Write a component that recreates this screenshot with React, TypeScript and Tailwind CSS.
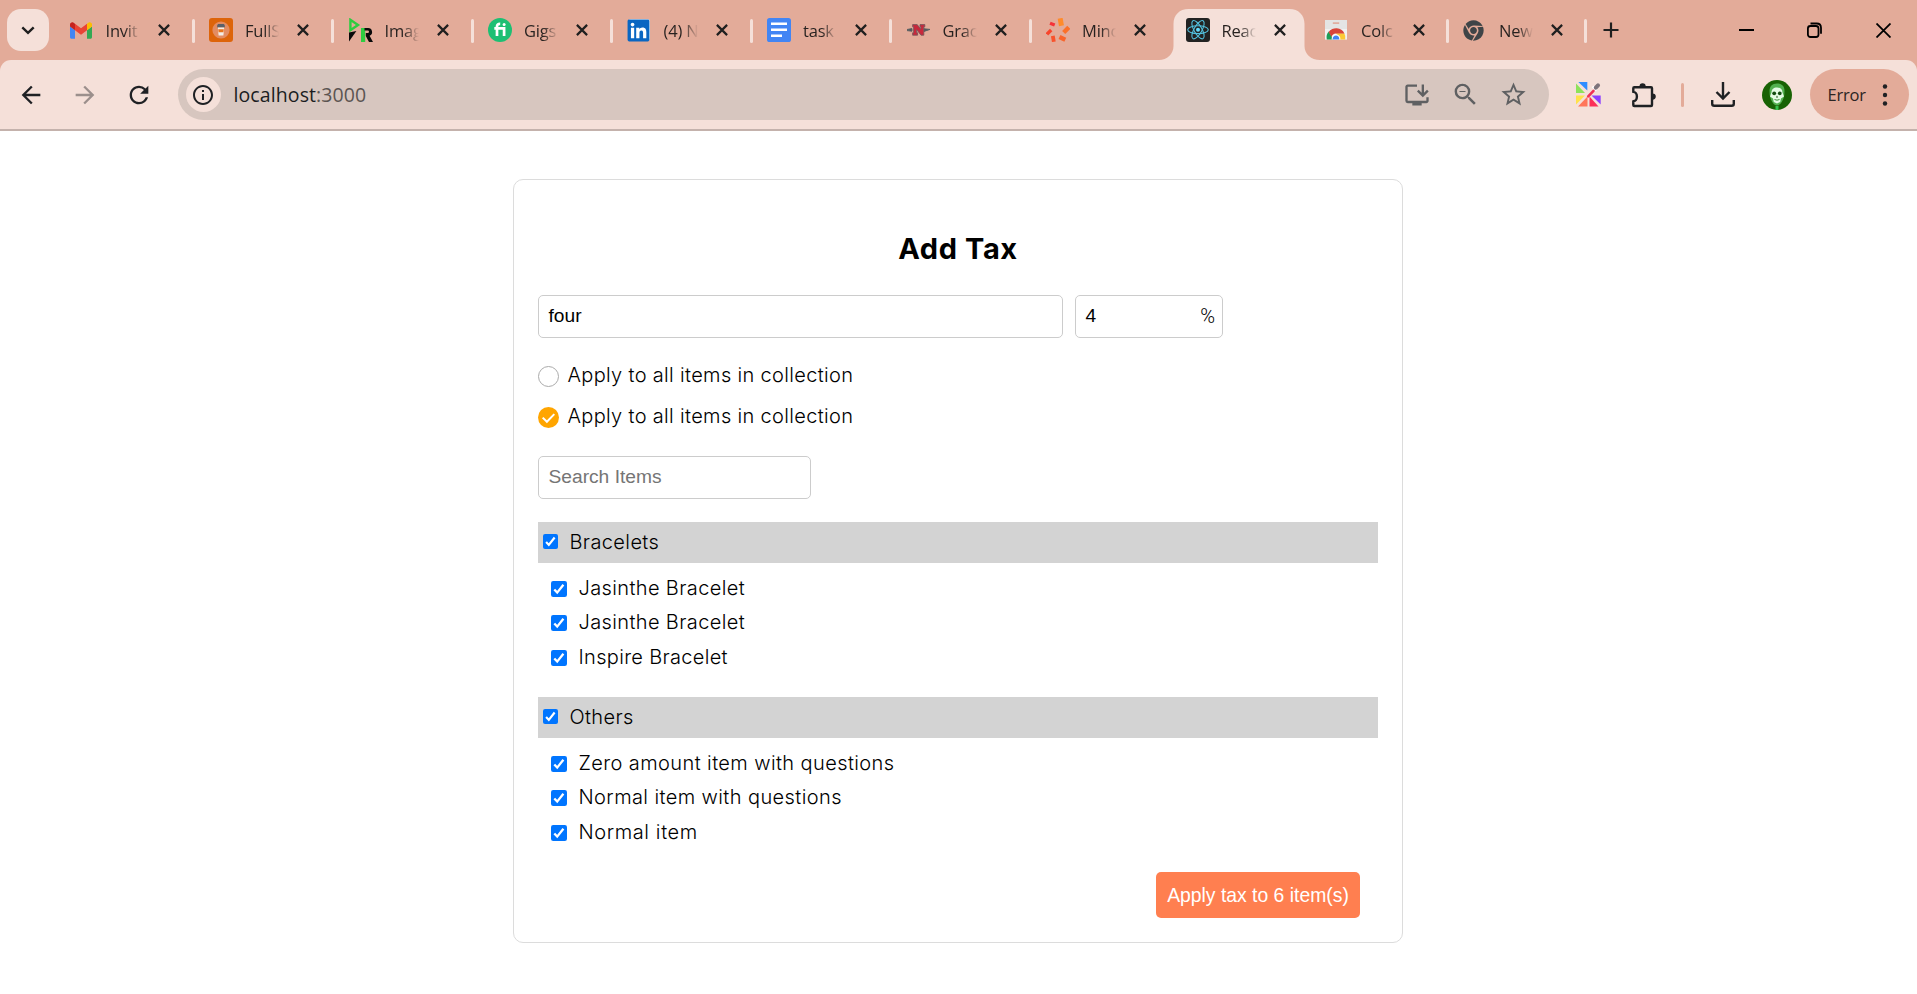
import type { ReactNode } from "react";
import { MdArrowBack, MdArrowForward, MdInfoOutline, MdInstallDesktop, MdRefresh, MdStarBorder, MdZoomOut } from "react-icons/md";
import { FaChrome, FaLinkedin } from "react-icons/fa";

function GmailIcon() {
  return (
    <svg width="22" height="17" viewBox="52 42 88 66">
      <path fill="#4285f4" d="M58 108h14V74L52 59v43c0 3.32 2.69 6 6 6" />
      <path fill="#34a853" d="M120 108h14c3.32 0 6-2.69 6-6V59l-20 15" />
      <path fill="#fbbc04" d="M120 48v26l20-15v-8c0-7.42-8.47-11.65-14.4-7.2" />
      <path fill="#ea4335" d="M72 74V48l24 18 24-18v26L96 92" />
      <path fill="#c5221f" d="M52 51v8l20 15V48l-5.6-4.2c-5.94-4.45-14.4-.22-14.4 7.2" />
    </svg>
  );
}

function CoffeeIcon() {
  return (
    <svg width="24" height="24" viewBox="0 0 24 24">
      <rect width="24" height="24" rx="3" fill="#dd640a" />
      <circle cx="12" cy="12" r="8.6" fill="#e38c62" />
      <path d="M8.200 7.400 9 6h6l.8 1.400v2H8.200z" fill="#5b6069" />
      <path d="M8.800 9.400h6.400L14.400 17.600H9.600z" fill="#f3eee8" />
      <path d="M9.200 11.200h5.600l-.4 3H9.600z" fill="#e8731c" />
    </svg>
  );
}

function TriangleRIcon() {
  return (
    <svg width="24" height="24" viewBox="0 0 24 24">
      <path d="M1.4 1.8v10.400L9 6.900z" fill="none" stroke="#2ecc40" strokeWidth="2.4" />
      <path d="M0 14.500 7.400 13 0 23.500z" fill="#0a0a0a" />
      <path d="M12 10h4.200v14H12z" fill="#2ecc40" />
      <path d="M15.5 10H19a4 4 0 0 1 1.6 7.7L24 24h-4l-3.2-6v-3h2a1.2 1.2 0 0 0 0-2.4h-3.3z" fill="#0a0a0a" />
    </svg>
  );
}

function FiIcon() {
  return (
    <svg width="24" height="24" viewBox="0 0 24 24">
      <circle cx="12" cy="12" r="12" fill="#1dbf73" />
      <path d="M6.3 10.4h9.8V18M9 18V8.6c0-1.9 1-2.8 3.2-2.7" fill="none" stroke="#fff" strokeWidth="2.7" />
      <circle cx="16.1" cy="6.6" r="1.5" fill="#fff" />
    </svg>
  );
}

function LinkedInIcon() {
  return (
    <span className="flex size-[22px] items-center justify-center rounded-[3px] bg-white text-[#0a66c2]">
      <FaLinkedin className="size-[25px] shrink-0" />
    </span>
  );
}

function DocsIcon() {
  return (
    <svg width="24" height="24" viewBox="0 0 24 24">
      <rect width="24" height="24" rx="2.6" fill="#4285f4" />
      <path d="M4 5.700h16M4 9.800h0M4 11.700h16M4 17.800h11" stroke="#fff" strokeWidth="2.600" />
    </svg>
  );
}

function NavyNIcon() {
  return (
    <svg width="24" height="24" viewBox="0 0 24 24">
      <path d="M0 11.500 5 10.600v2.600L0 12.600zM17 10.800l6 .6-6 2z" fill="#4f5558" stroke="#5d6265" strokeWidth="1" />
      <path d="M5.600 6.600h4.600l3.600 4.600V8.800h-.8V6.600h4.800v2.200h-1v8.400h-2.800l-4.400-5.600v3.200h1v2.400h-5v-2.400h1V8.800h-1z" fill="#c8283c" stroke="#70585a" strokeWidth=".8" />
    </svg>
  );
}

function SparkIcon() {
  return (
    <svg width="24" height="24" viewBox="0 0 24 24">
      <rect x="12.3" y=".2" width="5" height="7.6" fill="#ff8b2b" transform="rotate(-10 15 4)" />
      <rect x="18" y="8.4" width="4.4" height="7.2" fill="#fb7029" transform="rotate(45 20.3 12)" />
      <rect x="13.2" y="18.2" width="6.4" height="4.4" fill="#f9642a" transform="rotate(25 16.3 20.4)" />
      <rect x="5.4" y="17.8" width="3.8" height="6" fill="#f8522c" transform="rotate(-10 7.3 20.6)" />
      <rect x="0" y="12.4" width="6" height="3.4" fill="#f8452c" transform="rotate(-45 3 14)" />
      <rect x="3.9" y="4.4" width="5" height="3.4" fill="#f53238" transform="rotate(20 6.3 6)" />
    </svg>
  );
}

function ReactIcon() {
  return (
    <svg width="24" height="24" viewBox="0 0 24 24">
      <rect width="24" height="24" rx="3" fill="#222" />
      <g fill="none" stroke="#53c1de" strokeWidth="1.1">
        <ellipse cx="12" cy="11.7" rx="10.3" ry="3.9" />
        <ellipse cx="12" cy="11.7" rx="10.3" ry="3.9" transform="rotate(60 12 11.7)" />
        <ellipse cx="12" cy="11.7" rx="10.3" ry="3.9" transform="rotate(120 12 11.7)" />
      </g>
      <circle cx="12" cy="11.7" r="2" fill="#61dafb" />
    </svg>
  );
}

function WebStoreIcon() {
  return (
    <svg width="22" height="20" viewBox="0 0 22 20">
      <path d="M0 0h22v19.6H0z" fill="#f1f1f1" />
      <path d="M0 0h22v9H0z" fill="#e4e4e4" />
      <path d="M7.8 2.4h6.4v1.4H7.8z" fill="#e0a090" />
      <path d="M1.8 19.6a9.2 9.2 0 0 1 2-8.2l4.6 8.2z" fill="#1e9e57" />
      <path d="M20.2 19.6a9.2 9.2 0 0 0-.9-6.4H11l3 6.4z" fill="#fcc934" />
      <path d="M3.6 12a9.2 9.2 0 0 1 15.8 1.4H11a4.6 4.6 0 0 0-4.4 3.6z" fill="#d9453a" />
      <path d="M6.7 19.6a4.4 4.4 0 1 1 8.6 0z" fill="#fff" />
      <path d="M7.8 19.6a3.3 3.3 0 1 1 6.4 0z" fill="#4285f4" />
    </svg>
  );
}

function CloseIcon() {
  return (
    <svg width="12" height="12" viewBox="0 0 12 12">
      <path d="m.9.9 10.2 10.2M11.1.9.9 11.1" stroke="#1f1f1f" strokeWidth="2.2" />
    </svg>
  );
}

interface TabProps {
  icon: ReactNode;
  title: string;
  last?: boolean;
  active?: boolean;
  divider?: boolean;
}

function Tab({ icon, title, last, active, divider = true }: TabProps) {
  return (
    <div className={`relative flex h-[60px] shrink-0 items-center ${last ? "w-[138px]" : "w-[139.5px]"}`}>
      {active && (
        <svg className="absolute top-[9px] left-[-12px]" width="162" height="51" viewBox="0 0 162 51">
          <path d="M0 51c8 0 14.500-6 14.500-14V15c0-9 6-15 15-15h101c9 0 15 6 15 15v22c0 8 6.500 14 15.500 14z" fill="#f5e0d9" />
        </svg>
      )}
      <span className="relative ml-[14.500px] flex w-6 justify-start">{icon}</span>
      <span className="relative ml-[12px] w-[34px] bg-linear-to-r from-[#26211f] from-55% to-transparent to-100% bg-clip-text pt-[2px] text-[16.500px] leading-6 tracking-[-0.200px] whitespace-nowrap text-transparent">
        {title}
      </span>
      <span className="relative ml-[18px]">
        <CloseIcon />
      </span>
      {divider && <span className="absolute top-[19px] right-0 h-6 w-[3px] rounded-full bg-[#f5e0d9]" />}
    </div>
  );
}

function TabStrip() {
  return (
    <div className="flex h-[60px] items-center bg-[#e3ab99]">
      <div className="ml-[7px] flex size-[42px] shrink-0 items-center justify-center rounded-[14px] bg-[#f5e0d9]">
        <svg width="14" height="9" viewBox="0 0 14 9">
          <path d="m1.300 1.300 5.700 5.500 5.700-5.500" fill="none" stroke="#1f1f1f" strokeWidth="2.400" />
        </svg>
      </div>
      <div className="ml-[6px] flex">
        <Tab icon={<GmailIcon />} title="Invit" />
        <Tab icon={<CoffeeIcon />} title="FullS" />
        <Tab icon={<TriangleRIcon />} title="Imag" />
        <Tab icon={<FiIcon />} title="Gigs" />
        <Tab icon={<LinkedInIcon />} title="(4) N" />
        <Tab icon={<DocsIcon />} title="task" />
        <Tab icon={<NavyNIcon />} title="Grac" />
        <Tab icon={<SparkIcon />} title="Minc" divider={false} />
        <Tab icon={<ReactIcon />} title="Reac" active divider={false} />
        <Tab icon={<WebStoreIcon />} title="Colc" last />
        <Tab icon={<FaChrome className="size-[21px] text-[#3f4447]" />} title="New" last />
      </div>
      <svg className="ml-4" width="16" height="16" viewBox="0 0 16 16">
        <path d="M8 .5v15M.5 8h15" stroke="#1f1f1f" strokeWidth="2.200" />
      </svg>
      <div className="ml-auto flex items-center pr-[26px]">
        <span className="mr-[53px] h-[2px] w-[15px] bg-black" />
        <svg className="mr-[54px]" width="15" height="16" viewBox="0 0 15 16">
          <rect x=".9" y="4" width="10.600" height="11" rx="2.500" fill="none" stroke="#000" strokeWidth="1.800" />
          <path d="M3.500 1.500h6.200c2.500 0 4.300 1.800 4.300 4.300v6" fill="none" stroke="#000" strokeWidth="1.800" />
        </svg>
        <svg width="15" height="15" viewBox="0 0 15 15">
          <path d="m.5.5 14 14m0-14-14 14" stroke="#000" strokeWidth="1.800" />
        </svg>
      </div>
    </div>
  );
}

function ColorPickerIcon() {
  return (
    <svg width="25" height="25" viewBox="0 0 25 25">
      <path d="M2.300 0h9v8.500z" fill="#2f8dff" />
      <path d="M0 1.500 9 11H0z" fill="#8de25a" />
      <path d="M0 13.500h9L0 22.500z" fill="#ffe24a" />
      <path d="M11.500 14.500V24.500H2z" fill="#ff765a" />
      <path d="M13.500 14.500l9 10h-9z" fill="#fb2f58" />
      <path d="M15.500 13.500h9.200v9z" fill="#8d40ff" />
      <path d="m12.200 14.300 5.300-5.500" stroke="#f23056" strokeWidth="2.600" strokeLinecap="round" />
      <path d="m16.500 4.500 4 4" stroke="#fff" strokeWidth="2.200" />
      <path d="m19.800 5.700 2.200-2.400" stroke="#7d747b" strokeWidth="4" strokeLinecap="round" />
    </svg>
  );
}

function PuzzleIcon() {
  return (
    <svg width="26" height="26" viewBox="0 0 26 26">
      <path
        d="M2.300 6.200q0-1 1-1H20q1 0 1 1V23q0 1-1 1H3.300q-1 0-1-1v-3.700c2 0 3.600-2 3.600-4.700s-1.600-4.700-3.600-4.700z"
        fill="none"
        stroke="#1f2124"
        strokeWidth="2.400"
        strokeLinejoin="round"
      />
      <path d="M8.500 4.500a3.100 3.300 0 0 1 6.200 0zM21.500 11.500a3.300 3.100 0 0 1 0 6.200z" fill="#1f2124" />
    </svg>
  );
}

function SkullAvatar() {
  return (
    <svg width="30" height="30" viewBox="0 0 30 30">
      <circle cx="15" cy="15" r="15" fill="#186204" />
      <path d="M15 3.500c-5 0-7.500 3-7.500 7.500 0 5 1 8 2.500 10.500s3 4 5 4 3.500-1.500 5-4 2.500-5.500 2.500-10.500c0-4.500-2.500-7.500-7.500-7.500z" fill="#52b04f" />
      <path d="M15 7.500c-3.500 0-5.500 2-5.500 5L8 16.500l3 2 .8 3.500 3.200 1.500 3.200-1.500.8-3.500 3-2-1.500-4c0-3-2-5-5.500-5z" fill="#e4fbe4" />
      <circle cx="12.200" cy="13.300" r="1.900" fill="#124d10" />
      <circle cx="17.800" cy="13.300" r="1.900" fill="#124d10" />
      <path d="m15 15.500-1 2h2z" fill="#124d10" />
      <path d="M12.500 19.500q2.500 1.400 5 0" stroke="#3b8f3d" fill="none" />
      <path d="M15 26v4" stroke="#37c04c" strokeWidth="3" />
    </svg>
  );
}

function Toolbar() {
  return (
    <div className="h-[71px] bg-[#e3ab99]">
      <div className="flex h-[71px] items-center rounded-t-[11px] border-b-2 border-[#c4b2ac] bg-[#f5e0d9]">
        <MdArrowBack className="ml-[17px] size-[28px] shrink-0 text-[#1f2124]" />
        <MdArrowForward className="ml-[26px] size-[28px] shrink-0 text-[#9b8f8c]" />
        <MdRefresh className="ml-[26px] size-[28px] shrink-0 text-[#1f2124]" />
        <div className="ml-[25px] flex h-[51px] w-[1371px] shrink-0 items-center rounded-full bg-[#d7c6bf]">
          <span className="ml-[7.500px] flex size-[35px] items-center justify-center rounded-full bg-[#f5e0d9]">
            <MdInfoOutline className="size-6 text-[#1f2124]" />
          </span>
          <span className="ml-[13px] text-[19.500px] leading-7 tracking-[0.100px] text-[#1b1d22]">
            localhost<span className="text-[#5c5552]">:3000</span>
          </span>
          <MdInstallDesktop className="ml-auto size-[28px] text-[#5f6062]" />
          <MdZoomOut className="ml-[20px] size-[29px] text-[#5f6062]" />
          <MdStarBorder className="mr-[21px] ml-[19px] size-[29px] text-[#5f6062]" />
        </div>
        <div className="ml-[27px]">
          <ColorPickerIcon />
        </div>
        <div className="ml-[30px]">
          <PuzzleIcon />
        </div>
        <span className="ml-[24px] h-6 w-[3px] rounded-full bg-[#e3ab99]" />
        <svg className="ml-[27px]" width="24" height="25" viewBox="0 0 24 25">
          <path d="M12 0v16M5.500 10l6.500 6.500 6.500-6.500M1.200 18v3.800q0 2 2 2h17.600q2 0 2-2V18" fill="none" stroke="#1f2124" strokeWidth="2.400" />
        </svg>
        <div className="ml-[27px]">
          <SkullAvatar />
        </div>
        <div className="ml-[18px] flex h-[51px] w-[99px] items-center rounded-full bg-[#e3ab99] pl-[17.500px]">
          <span className="w-[49.500px] text-[16.500px] leading-6 tracking-[-0.200px] text-[#2b2523]">Error</span>
          <svg width="16" height="24" viewBox="0 0 16 24" fill="#1f2124">
            <circle cx="8" cy="3.500" r="2.200" />
            <circle cx="8" cy="12" r="2.200" />
            <circle cx="8" cy="20.500" r="2.200" />
          </svg>
        </div>
      </div>
    </div>
  );
}

function Checkbox({ small }: { small?: boolean }) {
  return (
    <svg className={`shrink-0 ${small ? "size-[15px]" : "size-[16px]"}`} viewBox="0 0 16 16">
      <rect width="16" height="16" rx="2.200" fill="#0075ff" />
      <path d="m3.300 8.500 2.900 3.100 6.200-7.900" fill="none" stroke="#fff" strokeWidth="2.300" />
    </svg>
  );
}

interface Item {
  label: string;
  tracking: string;
}

function Group({ title, tracking, items }: { title: string; tracking: string; items: Item[] }) {
  return (
    <section className="mt-[23px]">
      <div className="flex h-[41px] items-center gap-[11.500px] bg-[#d3d3d3] pb-[2px] pl-[5px]">
        <Checkbox small />
        <span className={tracking}>{title}</span>
      </div>
      <ul className="pt-[7.500px]">
        {items.map((item, i) => (
          <li key={i} className="flex h-[34.500px] items-center gap-[11.500px] pl-[13px]">
            <span className="mt-[2px]">
              <Checkbox />
            </span>
            <span className={item.tracking}>{item.label}</span>
          </li>
        ))}
      </ul>
    </section>
  );
}

function ScopeOption({ selected }: { selected?: boolean }) {
  return (
    <div className="flex h-[30px] items-center">
      <svg className="mt-[3px] mr-[8.500px] size-[21px]" viewBox="0 0 21 21">
        {selected ? (
          <>
            <circle cx="10.500" cy="10.500" r="10.500" fill="#ffa500" />
            <path d="m4.700 10.600 4.200 4.200 7.400-7.700" fill="none" stroke="#fff" strokeWidth="2" />
          </>
        ) : (
          <circle cx="10.500" cy="10.500" r="10" fill="#fff" stroke="#aaa" />
        )}
      </svg>
      <span className="tracking-[0.330px]">Apply to all items in collection</span>
    </div>
  );
}

const bracelets: Item[] = [
  { label: "Jasinthe Bracelet", tracking: "tracking-[0.370px]" },
  { label: "Jasinthe Bracelet", tracking: "tracking-[0.370px]" },
  { label: "Inspire Bracelet", tracking: "tracking-[0.320px]" },
];

const others: Item[] = [
  { label: "Zero amount item with questions", tracking: "tracking-[0.400px]" },
  { label: "Normal item with questions", tracking: "tracking-[0.400px]" },
  { label: "Normal item", tracking: "tracking-[0.600px]" },
];

function TaxForm() {
  return (
    <main className="mt-[48px] ml-[513px] h-[764px] w-[890px] rounded-[10px] border border-[#dcdcdc] bg-white px-6 pt-[47px] font-['Inter',sans-serif] text-[20px] leading-[30px] font-light text-black">
      <h2 className="text-center text-[29px] leading-[44px] font-bold tracking-[0.600px]">Add Tax</h2>
      <div className="mt-6 flex gap-[12px] font-['Liberation_Sans',Arial,sans-serif] text-[19.200px] font-normal">
        <div className="flex h-[43px] w-[525px] items-center rounded-[5px] border border-[#ccc] px-[9.500px] pb-px">four</div>
        <div className="flex h-[43px] w-[148px] items-center justify-between rounded-[5px] border border-[#ccc] pr-[7px] pb-px pl-[9.500px]">
          <span>4</span>
          <span className="font-['Roboto',sans-serif] text-[20px] font-light">%</span>
        </div>
      </div>
      <div className="mt-[22px] flex flex-col gap-[11px]">
        <ScopeOption />
        <ScopeOption selected />
      </div>
      <div className="mt-[25px] flex h-[43px] w-[273px] items-center rounded-[5px] border border-[#ccc] px-[9.500px] pb-[2px] font-['Liberation_Sans',Arial,sans-serif] text-[19.200px] font-normal text-[#757575]">
        Search Items
      </div>
      <Group title="Bracelets" tracking="tracking-[0.380px]" items={bracelets} />
      <Group title="Others" tracking="tracking-[0.350px]" items={others} />
      <div className="mt-[23px] flex justify-end pr-[18px]">
        <button className="h-[46px] w-[204px] rounded-[5px] bg-[#ff7f50] pb-px font-['Liberation_Sans',Arial,sans-serif] text-[19.350px] font-normal whitespace-nowrap text-white">
          Apply tax to 6 item(s)
        </button>
      </div>
    </main>
  );
}

export default function App() {
  return (
    <div className="h-[994px] w-[1917px] overflow-hidden bg-white font-['Open_Sans',sans-serif]">
      <TabStrip />
      <Toolbar />
      <TaxForm />
    </div>
  );
}
